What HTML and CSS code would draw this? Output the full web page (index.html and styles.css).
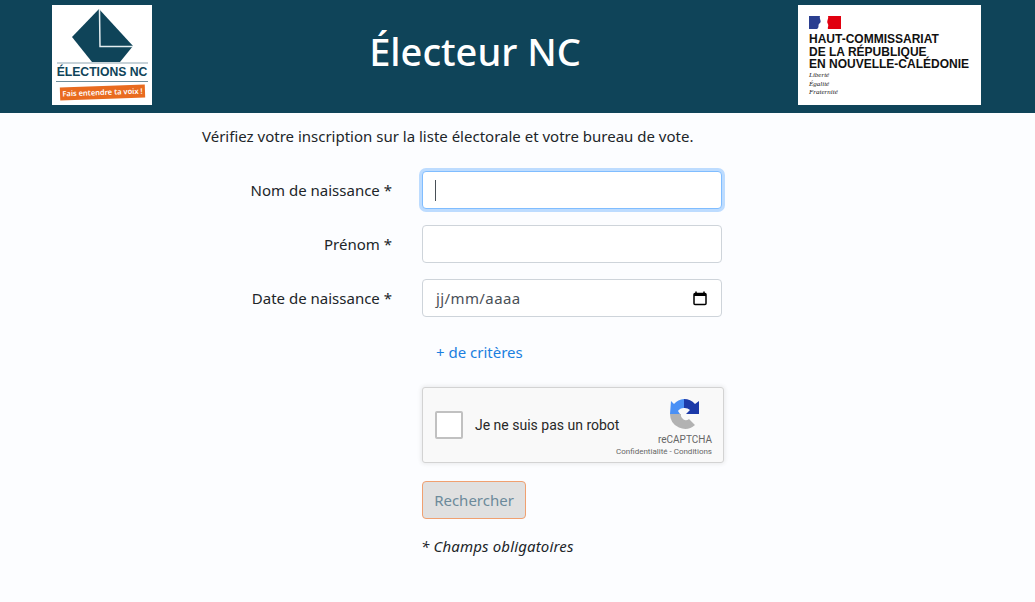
FILE: index.html
```html
<!DOCTYPE html>
<html lang="fr">
<head>
<meta charset="utf-8">
<title>Électeur NC</title>
<link rel="stylesheet" href="styles.css">
</head>
<body>
<header class="topbar">
  <div class="logo logo-left">
    <svg class="ballot" viewBox="0 0 94 56" width="94" height="56">
      <path d="M44 0 L78 37 L65 53 H37 L17 28 Z" fill="#0f4459"/>
      <path d="M44.500 0 L45 37.500 H78" fill="none" stroke="#e4edf0" stroke-width="1.500"/>
      <path d="M2 54 H93" stroke="#8fa6b1" stroke-width="1.200"/>
    </svg>
    <div class="logo-name">ÉLECTIONS NC</div>
    <div class="logo-rule"></div>
    <div class="logo-tag">Fais entendre ta voix !</div>
  </div>
  <h1 class="title">Électeur NC</h1>
  <div class="logo logo-right">
    <svg class="flag" viewBox="0 0 32 13" width="32" height="13">
      <rect width="15" height="13" fill="#2b3f90"/>
      <rect x="17" width="15" height="13" fill="#e1000f"/>
      <path d="M11 0 H19 C20 3 17 5 19 8 C20 10 18 12 19 13 H8 C11 11 8 9 11 7 C13 5 10 3 11 0 Z" fill="#fff"/>
    </svg>
    <div class="hc-name">HAUT-COMMISSARIAT<br>DE LA RÉPUBLIQUE<br>EN NOUVELLE-CALÉDONIE</div>
    <div class="hc-motto">Liberté<br>Égalité<br>Fraternité</div>
  </div>
</header>
<main class="content">
  <p class="intro">Vérifiez votre inscription sur la liste électorale et votre bureau de vote.</p>
  <form class="search-form">
    <div class="label">Nom de naissance *</div>
    <div class="field field-focus"><span class="caret"></span></div>
    <div class="label">Prénom *</div>
    <div class="field"></div>
    <div class="label">Date de naissance *</div>
    <div class="field field-date">
      <span class="placeholder">jj/mm/aaaa</span>
      <svg class="cal" viewBox="0 0 14 15" width="14" height="15">
        <path d="M3 .5V3M11 .5V3" stroke="#000" stroke-width="1.500" fill="none"/>
        <rect x="1" y="2.500" width="12" height="11" rx="1" fill="none" stroke="#000" stroke-width="1.500"/>
        <rect x="1" y="2.500" width="12" height="2.500" fill="#000"/>
      </svg>
    </div>
    <div class="controls">
      <a class="more" href="#">+ de critères</a>
      <div class="captcha">
        <span class="captcha-box"></span>
        <span class="captcha-text">Je ne suis pas un robot</span>
        <div class="captcha-brand">
          <svg class="captcha-logo" viewBox="0 0 30 31" width="30" height="31">
            <path d="M0 15 H11 A5 5 0 0 0 19 20 L25 26 A15 15 0 0 1 0 15 Z" fill="#b2b2b2"/>
            <path d="M14 0 A15 15 0 0 0 4 5 L1 2 L0 15 H10 L8 12 A7 7 0 0 1 14 9 Z" fill="#4a90f5"/>
            <path d="M14 0 A15 15 0 0 1 25 5 L29 2 V15 H16 L20 11 A8 8 0 0 0 14 9 Z" fill="#1c3aa9"/>
          </svg>
          <div class="captcha-name">reCAPTCHA</div>
          <div class="captcha-links">Confidentialité - Conditions</div>
        </div>
      </div>
      <button class="submit" type="button" disabled>Rechercher</button>
      <p class="note">* Champs obligatoires</p>
    </div>
  </form>
</main>
</body>
</html>
```
FILE: styles.css
```css
* { box-sizing: border-box; }
html, body { margin: 0; }
body {
  height: 602px;
  overflow: hidden;
  background: #fcfdff;
  color: #212529;
  font-family: "Noto Sans", "Open Sans", sans-serif;
  font-size: 15px;
  line-height: 22px;
}
.topbar {
  height: 113px;
  background: #0f4459;
  display: flex;
  align-items: flex-start;
  padding: 5px 54px 0 52px;
}
.logo {
  height: 100px;
  background: #fff;
  flex: none;
}
.logo-left {
  width: 100px;
  display: flex;
  flex-direction: column;
  align-items: center;
  padding-top: 4px;
}
.ballot { display: block; flex: none; }
.logo-name {
  font-family: "Liberation Sans", sans-serif;
  font-weight: 700;
  font-size: 12.200px;
  line-height: 15px;
  color: #0f4459;
  white-space: nowrap;
}
.logo-rule { width: 92px; height: 1px; margin-top: 1px; background: #6f8d9b; flex: none; }
.logo-tag {
  margin-top: 4px;
  width: 85px;
  height: 13px;
  background: #e96b1f;
  color: #fff;
  font-family: "Noto Sans", sans-serif;
  font-weight: 600;
  font-size: 7.500px;
  line-height: 13px;
  text-align: center;
  white-space: nowrap;
  transform: rotate(-2deg);
}
.title {
  flex: 1;
  margin: 0;
  padding-top: 20px;
  text-align: center;
  color: #fff;
  font-size: 38px;
  line-height: 52px;
  font-weight: 500;
}
.logo-right {
  width: 183px;
  padding: 11px 0 0 11px;
}
.flag { display: block; }
.hc-name {
  margin-top: 4px;
  font-family: "Liberation Sans", sans-serif;
  font-weight: 700;
  font-size: 12px;
  line-height: 12.500px;
  color: #111;
  white-space: nowrap;
}
.hc-motto {
  margin-top: .5px;
  font-family: "Liberation Serif", serif;
  font-style: italic;
  font-size: 7px;
  line-height: 8.500px;
  color: #222;
}
.content { padding: 12px 0 0 202px; }
.intro { margin: 0 0 24px; white-space: nowrap; }
.search-form {
  display: grid;
  grid-template-columns: 190px 300px;
  column-gap: 30px;
  row-gap: 16px;
}
.label {
  height: 38px;
  line-height: 38px;
  text-align: right;
  white-space: nowrap;
}
.field {
  height: 38px;
  background: #fff;
  border: 1px solid #ced4da;
  border-radius: 4px;
  display: flex;
  align-items: center;
  padding: 0 13px;
}
.field-focus {
  border-color: #80bdff;
  box-shadow: 0 0 0 3px rgba(0, 123, 255, .25);
}
.caret { width: 1px; height: 21px; margin-left: -1px; background: #495057; }
.field-date { justify-content: space-between; padding-right: 14px; }
.placeholder { color: #495057; letter-spacing: .4px; }
.cal { display: block; }
.controls {
  grid-column: 2;
  display: flex;
  flex-direction: column;
  align-items: flex-start;
}
.more {
  margin: 8px 0 0 14px;
  color: #1a7fe0;
  text-decoration: none;
}
.captcha {
  margin-top: 24px;
  width: 302px;
  height: 76px;
  background: #f9f9f9;
  border: 1px solid #d3d3d3;
  border-radius: 3px;
  box-shadow: 0 0 4px 1px rgba(0, 0, 0, .08);
  display: flex;
  align-items: center;
  padding: 0 11px 0 12px;
  font-family: Roboto, sans-serif;
}
.captcha-box {
  width: 28px;
  height: 28px;
  background: #fff;
  border: 2px solid #c1c1c1;
  border-radius: 2px;
  flex: none;
}
.captcha-text {
  flex: 1;
  min-width: 0;
  margin-left: 12px;
  font-size: 14px;
  color: #282828;
  white-space: nowrap;
}
.captcha-brand {
  flex: none;
  margin-left: -10px;
  align-self: flex-start;
  display: flex;
  flex-direction: column;
  align-items: flex-end;
  padding-top: 11px;
  width: 100px;
}
.captcha-logo { display: block; margin-right: 12px; }
.captcha-name {
  font-size: 10px;
  line-height: 12px;
  margin-top: 4px;
  color: #666;
}
.captcha-links {
  font-size: 8px;
  line-height: 10px;
  margin-top: 1px;
  color: #666;
  white-space: nowrap;
}
.submit {
  margin-top: 18px;
  width: 104px;
  height: 38px;
  padding: 0;
  background: #e0e0e0;
  border: 1px solid #f0a070;
  border-radius: 4px;
  color: #6c8a9a;
  font: inherit;
}
.note {
  margin: 16px 0 0 -1px;
  font-style: italic;
  letter-spacing: .15px;
}
```
